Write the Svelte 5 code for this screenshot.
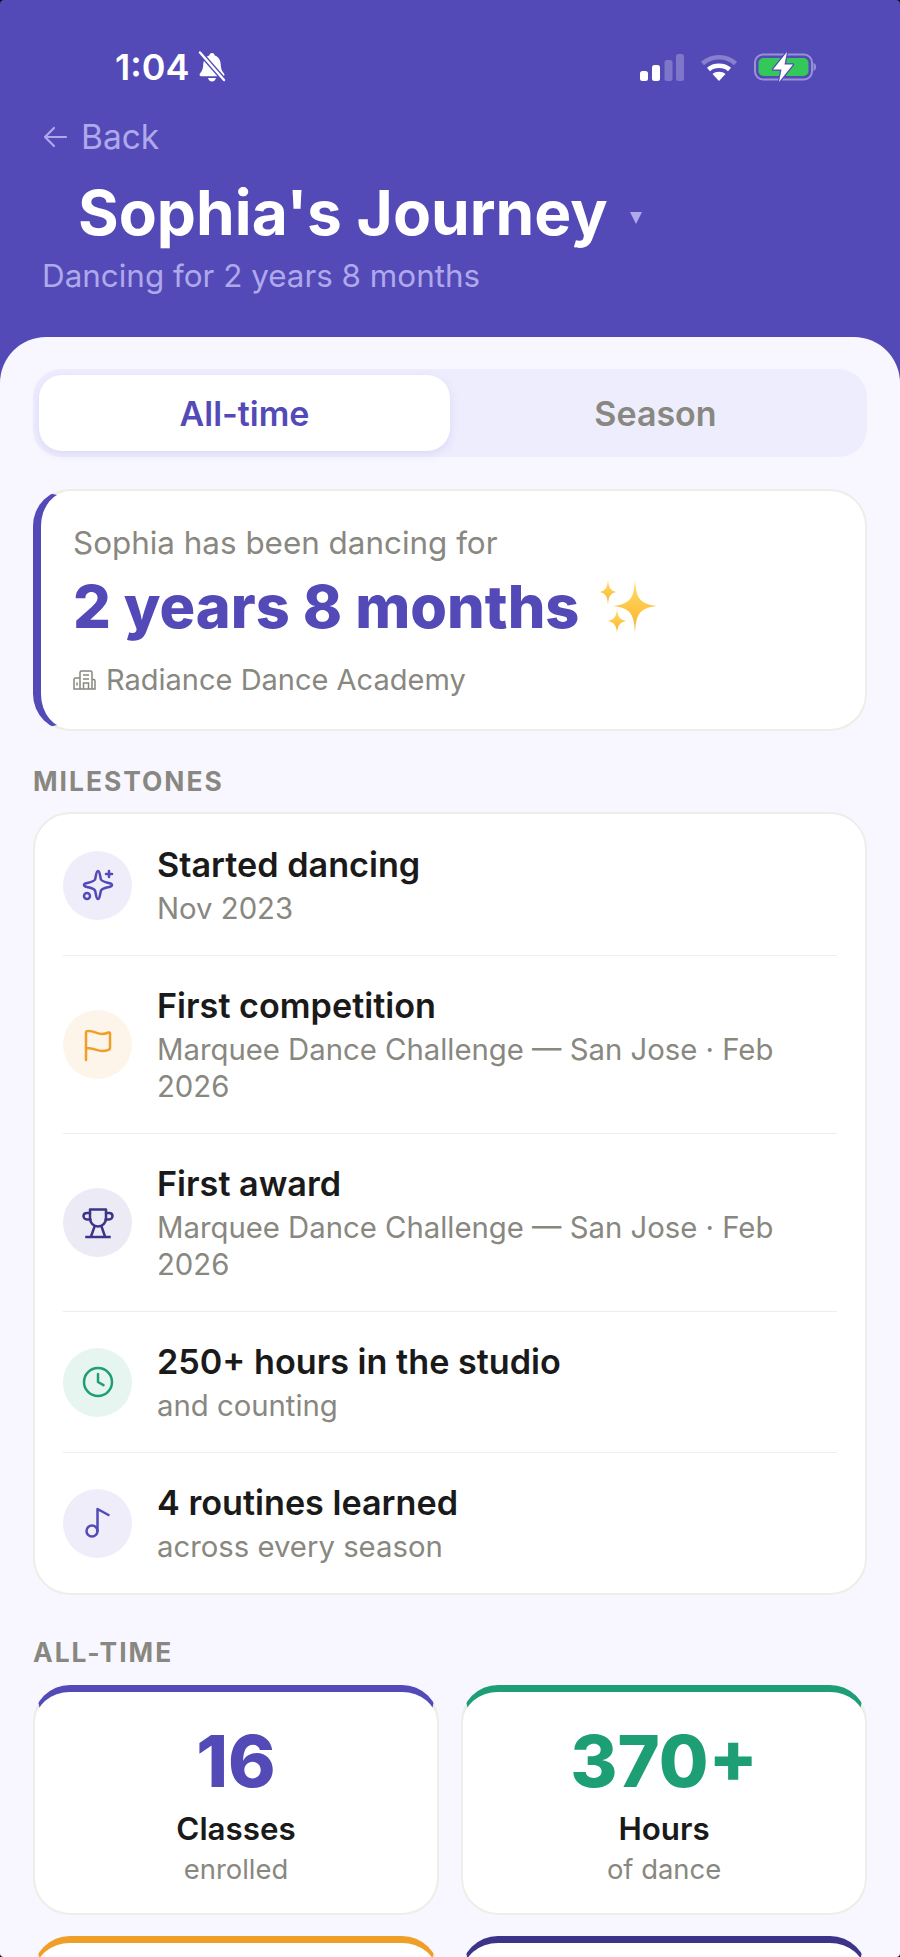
<script lang="ts">
  const milestones = [
    { icon: 'sparkle', tone: 'violet', title: 'Started dancing', sub: 'Nov 2023' },
    { icon: 'flag', tone: 'amber', title: 'First competition', sub: 'Marquee Dance Challenge — San Jose · Feb 2026' },
    { icon: 'trophy', tone: 'navy', title: 'First award', sub: 'Marquee Dance Challenge — San Jose · Feb 2026' },
    { icon: 'clock', tone: 'green', title: '250+ hours in the studio', sub: 'and counting' },
    { icon: 'note', tone: 'violet', title: '4 routines learned', sub: 'across every season' }
  ]

  const stats = [
    { tone: 'violet', value: '16', label: 'Classes', sub: 'enrolled' },
    { tone: 'green', value: '370+', label: 'Hours', sub: 'of dance' },
    { tone: 'amber', value: '', label: '', sub: '' },
    { tone: 'navy', value: '', label: '', sub: '' }
  ]
</script>

<div class="screen">
  <header class="header">
    <div class="status">
      <div class="status-left">
        <span class="time">1:04</span>
        <svg width="30" height="32" viewBox="0 0 30 32" fill="none">
          <path d="M15 2c-1.600 0-2.500 1-2.700 2.400C8.500 5.600 6.500 9 6.300 13c-.2 4.500-1 7-3.300 9.500-1 1.100-.4 2.700 1.200 2.700h21.600c1.600 0 2.200-1.600 1.200-2.700-2.300-2.500-3.100-5-3.300-9.500-.2-4-2.200-7.400-6-8.600C17.500 3 16.600 2 15 2z" fill="#fff"/>
          <path d="M11 27h8c-.4 2-2 3.400-4 3.400S11.400 29 11 27z" fill="#fff"/>
          <path d="M3 1.500 27 29" stroke="#534ab7" stroke-width="5"/>
          <path d="M3 1.500 27 29" stroke="#fff" stroke-width="2.400" stroke-linecap="round"/>
        </svg>
      </div>
      <div class="status-right">
        <svg width="44" height="27" viewBox="0 0 44 27">
          <rect x="0" y="17" width="8" height="10" rx="2.500" fill="#fff"/>
          <rect x="12" y="11" width="8" height="16" rx="2.500" fill="#fff"/>
          <rect x="24.500" y="6" width="8" height="21" rx="2.500" fill="#fff" opacity=".25"/>
          <rect x="36" y="0" width="8" height="27" rx="2.500" fill="#fff" opacity=".25"/>
        </svg>
        <svg width="38" height="27" viewBox="0 0 38 27" fill="none">
          <path d="M2.500 9.500C11.500 1 26.500 1 35.500 9.500" stroke="#fff" stroke-opacity=".3" stroke-width="4.500"/>
          <path d="M8.500 15.500c5.500-5 15.500-5 21 0" stroke="#fff" stroke-width="4.500"/>
          <path d="M19 27l-6.500-7c3.500-3 9.500-3 13 0z" fill="#fff"/>
        </svg>
        <svg width="62" height="34" viewBox="0 0 62 34" fill="none">
          <rect x="1" y="4.500" width="57" height="25" rx="8" stroke="#fff" stroke-opacity=".4" stroke-width="2"/>
          <rect x="4.500" y="8" width="50" height="18" rx="5" fill="#34c759"/>
          <path d="M59.500 13v8c1.800-.6 2.500-2.200 2.500-4s-.7-3.400-2.500-4z" fill="#fff" fill-opacity=".4"/>
          <path d="M33 2 19 19.500h8.500L25 32l14-17.500h-8.500z" fill="#fff" stroke="#534ab7" stroke-width="2.500" stroke-linejoin="round" paint-order="stroke"/>
        </svg>
      </div>
    </div>

    <div class="back">
      <svg width="26" height="26" viewBox="0 0 26 26" fill="none">
        <path d="M24 13H3M12 4l-9 9 9 9" stroke="#afa9ec" stroke-width="2.200" stroke-linecap="round" stroke-linejoin="round"/>
      </svg>
      <span>Back</span>
    </div>

    <div class="title-row">
      <h1>Sophia's Journey</h1>
      <span class="caret"></span>
    </div>
    <p class="subtitle">Dancing for 2 years 8 months</p>
  </header>

  <main class="sheet">
    <div class="tabs">
      <div class="tab active">All-time</div>
      <div class="tab">Season</div>
    </div>

    <section class="hero">
      <p class="hero-lead">Sophia has been dancing for</p>
      <div class="hero-value">
        <span>2 years 8 months</span>
        <svg width="58" height="54" viewBox="0 0 58 54">
          <defs>
            <linearGradient id="gold" x1="0" y1="0" x2="0" y2="1">
              <stop offset="0" stop-color="#ffe066"/>
              <stop offset="1" stop-color="#fbb02d"/>
            </linearGradient>
          </defs>
          <path d="M35 0C36 17 38 25 57 27C38 29 36 37 35 54C34 37 32 29 13 27C32 25 34 17 35 0Z" fill="url(#gold)"/>
          <path d="M8 0C8.500 8 10 11.500 16 13C10 14.500 8.500 18 8 26C7.500 18 6 14.500 0 13C6 11.500 7.500 8 8 0Z" fill="url(#gold)"/>
          <path d="M17 30C17.500 37 19.500 40.500 26 42C19.500 43.500 17.500 47 17 54C16.500 47 14.500 43.500 8 42C14.500 40.500 16.500 37 17 30Z" fill="url(#gold)"/>
        </svg>
      </div>
      <div class="hero-studio">
        <svg width="23" height="20" viewBox="0 0 23 20" fill="none" stroke="#888780" stroke-width="1.500">
          <path d="M7 19V2.500A1.500 1.500 0 0 1 8.500 1h9A1.500 1.500 0 0 1 19 2.500V19"/>
          <path d="M7 8H2.500A1.500 1.500 0 0 0 1 9.500V19h21v-8a1.500 1.500 0 0 0-1.500-1.500H19"/>
          <path d="M10 5h6M10 9h6M10.500 19v-6h5v6M4 12.500v3"/>
        </svg>
        <span>Radiance Dance Academy</span>
      </div>
    </section>

    <h2 class="label">MILESTONES</h2>
    <section class="milestones">
      {#each milestones as m}
        <div class="row">
          <div class="badge {m.tone}">
            <svg width="36" height="36" viewBox="0 0 36 36" fill="none" stroke="currentColor" stroke-width="2.500" stroke-linecap="round" stroke-linejoin="round">
              {#if m.icon === 'sparkle'}
                <path d="M18 4C20 4 20 10 21 12.500C22 14.500 25 15 29 16C33 17 33 19 29 20C25 21 22 21.500 21 23.500C20 26 20 32 18 32C16 32 16 26 15 23.500C14 21.500 11 21 7 20C3 19 3 17 7 16C11 15 14 14.500 15 12.500C16 10 16 4 18 4Z"/>
                <path d="M29 4v6M26 7h6"/>
                <circle cx="7" cy="29" r="3"/>
              {:else if m.icon === 'flag'}
                <path d="M6 33V5.500C6 4 7 4 8.500 4 13 3.500 17 7 22 7c3 0 5-.8 6.500-1.500.8-.3 1.500 0 1.500 1V21c0 1-.5 1.500-1.500 1.800C27 23.500 25 24 22 24c-5 0-9-3.500-16-3"/>
              {:else if m.icon === 'trophy'}
                <path d="M10 4.500h16v9c0 4.500-3.500 8-8 8s-8-3.500-8-8z"/>
                <path d="M10 8H7c-2 0-3.500 1.200-3.500 3S5 14.500 7 14.500h3.500M26 8h3c2 0 3.500 1.200 3.500 3S31 14.500 29 14.500h-3.500"/>
                <path d="M14.500 21.500 11 31.500M21.500 21.500l3.500 10M6.500 32h23" stroke-linecap="square"/>
              {:else if m.icon === 'clock'}
                <circle cx="18" cy="18" r="14"/>
                <path d="M18 10v8l5.500 3.200"/>
              {:else}
                <circle cx="12" cy="26" r="5.500"/>
                <path d="M17.500 26V4l11 6"/>
              {/if}
            </svg>
          </div>
          <div class="row-text">
            <div class="row-title">{m.title}</div>
            <div class="row-sub">{m.sub}</div>
          </div>
        </div>
      {/each}
    </section>

    <h2 class="label all-time">ALL-TIME</h2>
    <section class="stats">
      {#each stats as s}
        <div class="stat {s.tone}">
          {#if s.value}
            <div class="stat-value">{s.value}</div>
            <div class="stat-label">{s.label}</div>
            <div class="stat-sub">{s.sub}</div>
          {/if}
        </div>
      {/each}
    </section>
  </main>
</div>

<style>
  :global(body) {
    margin: 0;
    background: #000;
  }

  .screen {
    height: 1957px;
    overflow: hidden;
    background: #534ab7;
    font-family: Inter, "Noto Sans", sans-serif;
    border-radius: 4px;
  }

  /* header */
  .header {
    height: 337px;
    box-sizing: border-box;
    padding: 50px 42px 0;
    color: #fff;
  }
  .status {
    height: 34px;
    display: flex;
    justify-content: space-between;
    align-items: center;
    padding: 0 42px 0 73px;
  }
  .status-left {
    display: flex;
    align-items: center;
    gap: 8px;
  }
  .time {
    font-size: 36px;
    font-weight: 600;
    line-height: 34px;
  }
  .status-right {
    display: flex;
    align-items: center;
    gap: 16px;
  }
  .back {
    display: flex;
    align-items: center;
    gap: 13px;
    margin-top: 34px;
    font-size: 33.500px;
    line-height: 38px;
    color: #afa9ec;
  }
  .title-row {
    display: flex;
    align-items: center;
    gap: 22px;
    padding-left: 36px;
    margin-top: 21px;
  }
  h1 {
    margin: 0;
    font-size: 62.200px;
    line-height: 72px;
    font-weight: 700;
  }
  .caret {
    width: 0;
    height: 0;
    margin-top: 10px;
    border-left: 6.500px solid transparent;
    border-right: 6.500px solid transparent;
    border-top: 12px solid #afa9ec;
  }
  .subtitle {
    margin: 8px 0 0;
    font-size: 31.400px;
    line-height: 38px;
    color: #afa9ec;
  }

  /* sheet */
  .sheet {
    background: #f8f7ff;
    border-radius: 46px 46px 0 0;
    padding: 32px 33px 0;
  }
  .tabs {
    display: flex;
    height: 88px;
    box-sizing: border-box;
    padding: 6px;
    background: #eeedfe;
    border-radius: 28px;
  }
  .tab {
    flex: 1;
    display: flex;
    align-items: center;
    justify-content: center;
    border-radius: 23px;
    font-size: 34px;
    font-weight: 600;
    color: #888780;
  }
  .tab.active {
    background: #fff;
    color: #534ab7;
    box-shadow: 0 3px 10px rgba(83, 74, 183, 0.12);
  }

  .hero {
    margin-top: 32px;
    height: 242px;
    box-sizing: border-box;
    padding: 32px 32px 0;
    background: #fff;
    border: 2px solid #eeeee8;
    border-left: 8px solid #534ab7;
    border-radius: 37px;
  }
  .hero-lead {
    margin: 0;
    font-size: 31.400px;
    line-height: 40px;
    color: #888780;
  }
  .hero-value {
    display: flex;
    align-items: center;
    gap: 21px;
    margin-top: 7px;
    height: 72px;
    font-size: 59.400px;
    font-weight: 800;
    color: #534ab7;
  }
  .hero-studio {
    display: flex;
    align-items: center;
    gap: 10px;
    margin-top: 18px;
    font-size: 29px;
    line-height: 40px;
    color: #888780;
  }

  .label {
    margin: 35px 0 0;
    height: 30px;
    font-size: 26.400px;
    line-height: 30px;
    font-weight: 700;
    letter-spacing: 2px;
    color: #888780;
  }
  .label.all-time {
    margin-top: 42px;
  }

  /* milestones */
  .milestones {
    margin-top: 16px;
    box-sizing: border-box;
    padding: 0 28px;
    background: #fff;
    border: 2px solid #eeeee8;
    border-radius: 37px;
  }
  .row {
    display: flex;
    align-items: center;
    gap: 25px;
    padding: 28px 0;
    border-bottom: 1px solid #eeeee8;
  }
  .row:first-child {
    padding-top: 29px;
  }
  .row:last-child {
    border-bottom: 0;
  }
  .badge {
    flex: none;
    width: 69px;
    height: 69px;
    border-radius: 50%;
    display: flex;
    align-items: center;
    justify-content: center;
  }
  .badge.violet {
    background: #eeedf9;
    color: #534ab7;
  }
  .badge.amber {
    background: #fdf5ea;
    color: #ef9f27;
  }
  .badge.navy {
    background: #ecebf5;
    color: #3c3489;
  }
  .badge.green {
    background: #e7f5f0;
    color: #1d9e75;
  }
  .row-title {
    font-size: 34.200px;
    line-height: 44px;
    font-weight: 600;
    color: #1a1a1a;
  }
  .row-sub {
    margin-top: 3px;
    font-size: 29.300px;
    line-height: 37px;
    color: #888780;
  }

  /* stats */
  .stats {
    display: grid;
    grid-template-columns: 1fr 1fr;
    gap: 21px 22px;
    margin-top: 18px;
  }
  .stat {
    height: 230px;
    box-sizing: border-box;
    padding-top: 31px;
    background: #fff;
    border: 2px solid #eeeee8;
    border-top-width: 7px;
    border-radius: 37px;
    text-align: center;
  }
  .stat.violet { border-top-color: #534ab7; color: #534ab7; }
  .stat.green { border-top-color: #1d9e75; color: #1d9e75; }
  .stat.amber { border-top-color: #ef9f27; }
  .stat.navy { border-top-color: #3c3489; }
  .stat-value {
    font-size: 72px;
    line-height: 76px;
    font-weight: 800;
  }
  .stat-label {
    margin-top: 10px;
    font-size: 31.300px;
    line-height: 40px;
    font-weight: 600;
    color: #1a1a1a;
  }
  .stat-sub {
    margin-top: 3px;
    font-size: 27.400px;
    line-height: 34px;
    color: #888780;
  }
</style>
